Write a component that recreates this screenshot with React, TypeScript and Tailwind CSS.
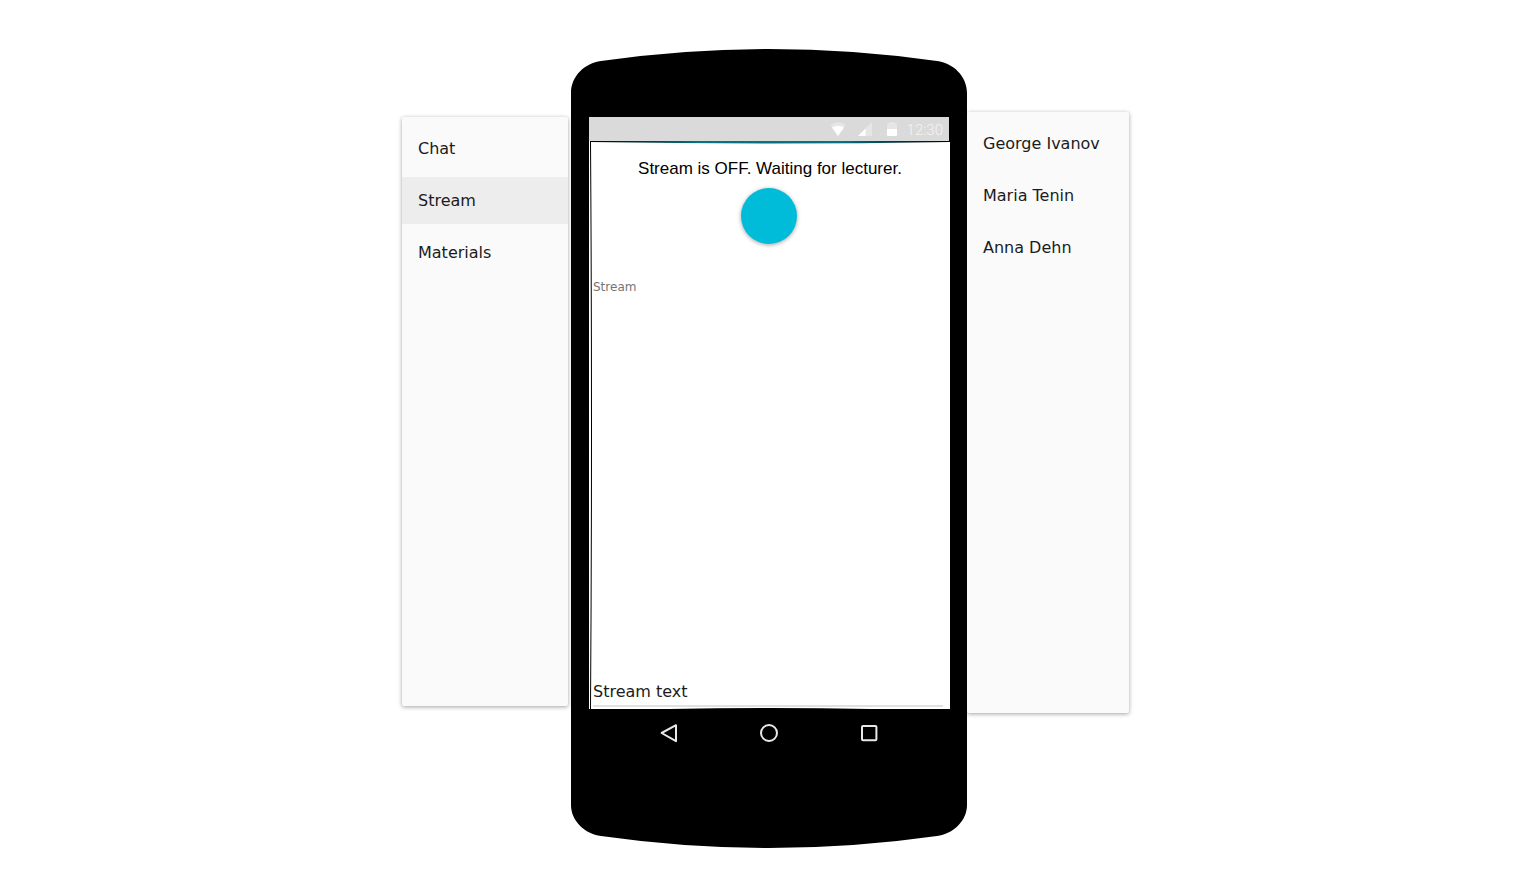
const menuItems = ['Chat', 'Stream', 'Materials'];
const people = ['George Ivanov', 'Maria Tenin', 'Anna Dehn'];

const paper =
  "rounded-xs bg-[#fafafa] font-['DejaVu_Sans',sans-serif] text-base leading-6 text-[#1c1c1c] shadow-[0_1px_4px_0_rgba(0,0,0,0.37)]";

function Menu() {
  return (
    <nav className={`${paper} mt-[68px] mr-[3px] flex h-[589px] w-[166px] flex-col gap-[5px] pt-2`}>
      {menuItems.map((item) => (
        <button
          key={item}
          type="button"
          className={`h-[47px] w-full px-4 text-left ${item === 'Stream' ? 'bg-[#ededed]' : ''}`}
        >
          {item}
        </button>
      ))}
    </nav>
  );
}

function People() {
  return (
    <ul className={`${paper} mt-[63px] h-[601px] w-[162px] pt-[6px]`}>
      {people.map((name) => (
        <li key={name} className="flex h-[52px] items-center px-4 whitespace-nowrap">
          {name}
        </li>
      ))}
    </ul>
  );
}

function StatusBar() {
  return (
    <div className="mr-px flex h-6 items-center justify-end bg-[#dadada] pr-[6px]">
      <svg width="16" height="14" viewBox="0 0 16 14" className="mr-[11px]" aria-hidden="true">
        <path d="M8 14 L0.5 3 Q8 -2.5 15.5 3 Z" fill="#e6e6e6" />
        <path d="M8 14 L2 5.4 Q8 2 14 5.4 Z" fill="#fff" />
      </svg>
      <svg width="16" height="14" viewBox="0 0 16 14" className="mr-[14px]" aria-hidden="true">
        <path d="M1 14 L15 0 V14 Z" fill="#e6e6e6" />
        <path d="M1 14 L8.5 6.5 V14 Z" fill="#fff" />
      </svg>
      <svg width="10" height="14" viewBox="0 0 10 14" className="mr-[10px]" aria-hidden="true">
        <path d="M0 7 V2 Q0 1 1 1 H3 V0 H7 V1 H9 Q10 1 10 2 V7 Z" fill="#e6e6e6" />
        <path d="M0 7 H10 V13 Q10 14 9 14 H1 Q0 14 0 13 Z" fill="#fff" />
      </svg>
      <span className="pt-[2px] font-['Roboto',sans-serif] text-[15px] leading-5 font-light text-[#f4f4f4]">12:30</span>
    </div>
  );
}

function NavBar() {
  return (
    <div className="flex h-12 items-center justify-center gap-[76px] pr-[2px]">
      <button type="button" aria-label="Back">
        <svg width="24" height="24" viewBox="0 0 24 24" fill="none" stroke="#e8e8e8" strokeWidth="2" strokeLinejoin="round" aria-hidden="true">
          <path d="M4.6 12 L19 4.2 V20.2 Z" />
        </svg>
      </button>
      <button type="button" aria-label="Home">
        <svg width="24" height="24" viewBox="0 0 24 24" fill="none" stroke="#e8e8e8" strokeWidth="2" aria-hidden="true">
          <circle cx="12" cy="12" r="8" />
        </svg>
      </button>
      <button type="button" aria-label="Recent apps">
        <svg width="24" height="24" viewBox="0 0 24 24" fill="none" stroke="#e8e8e8" strokeWidth="2" aria-hidden="true">
          <rect x="5" y="5" width="14.4" height="14.2" rx="1" />
        </svg>
      </button>
    </div>
  );
}

function Phone() {
  return (
    <section className="relative w-[396px]">
      <svg viewBox="0 0 396 68" className="block w-full" aria-hidden="true">
        <path d="M0 68 V44 C0 27 14 14 30 12 Q198 -12 366 12 C382 14 396 27 396 44 V68 Z" />
      </svg>
      <div className="bg-black pr-[17px] pl-[18px]">
        <StatusBar />
        <main className="relative flex h-[568px] flex-col bg-white pt-4 pr-[5px] pl-1">
          <svg
            viewBox="0 0 361 568"
            className="pointer-events-none absolute inset-0 h-full w-full"
            aria-hidden="true"
          >
            <defs>
              <linearGradient id="edge">
                <stop offset="0" stopColor="#000" />
                <stop offset="0.3" stopColor="#067282" />
                <stop offset="0.7" stopColor="#067282" />
                <stop offset="1" stopColor="#000" />
              </linearGradient>
            </defs>
            <path d="M1 0 H361 V1 Q181 4 1 1 Z" fill="url(#edge)" />
            <path d="M1 0 H2 Q4 284 2 568 H1 Q3 284 1 0 Z" fill="#000" />
            <path d="M80 568 Q181 566 282 568 Z" fill="#000" />
          </svg>
          <p className="pl-[2px] text-center font-['Liberation_Sans',sans-serif] text-[17px] leading-6 text-black">
            Stream is OFF. Waiting for lecturer.
          </p>
          <button
            type="button"
            aria-label="Start stream"
            className="mt-[7px] size-14 self-center rounded-full bg-[#00bcd8] shadow-[0_1px_4px_0_rgba(0,0,0,0.37)]"
          />
          <div className="mt-[35px] mr-[2px] flex grow flex-col justify-between font-['DejaVu_Sans',sans-serif]">
            <label htmlFor="stream" className="text-xs leading-4 text-[#757575]">
              Stream
            </label>
            <input
              id="stream"
              type="text"
              defaultValue="Stream text"
              className="mb-[2px] h-[30px] w-full border-b-2 border-[#e1e1e1] bg-transparent text-base leading-6 text-[#1c1c1c] outline-none"
            />
          </div>
        </main>
        <NavBar />
      </div>
      <svg viewBox="0 0 396 91" className="block w-full" aria-hidden="true">
        <path d="M0 0 V48 C0 64 14 77 30 79 Q198 103 366 79 C382 77 396 64 396 48 V0 Z" />
      </svg>
    </section>
  );
}

export default function App() {
  return (
    <div className="flex min-h-screen items-start justify-center bg-white pt-[49px]">
      <Menu />
      <Phone />
      <People />
    </div>
  );
}
